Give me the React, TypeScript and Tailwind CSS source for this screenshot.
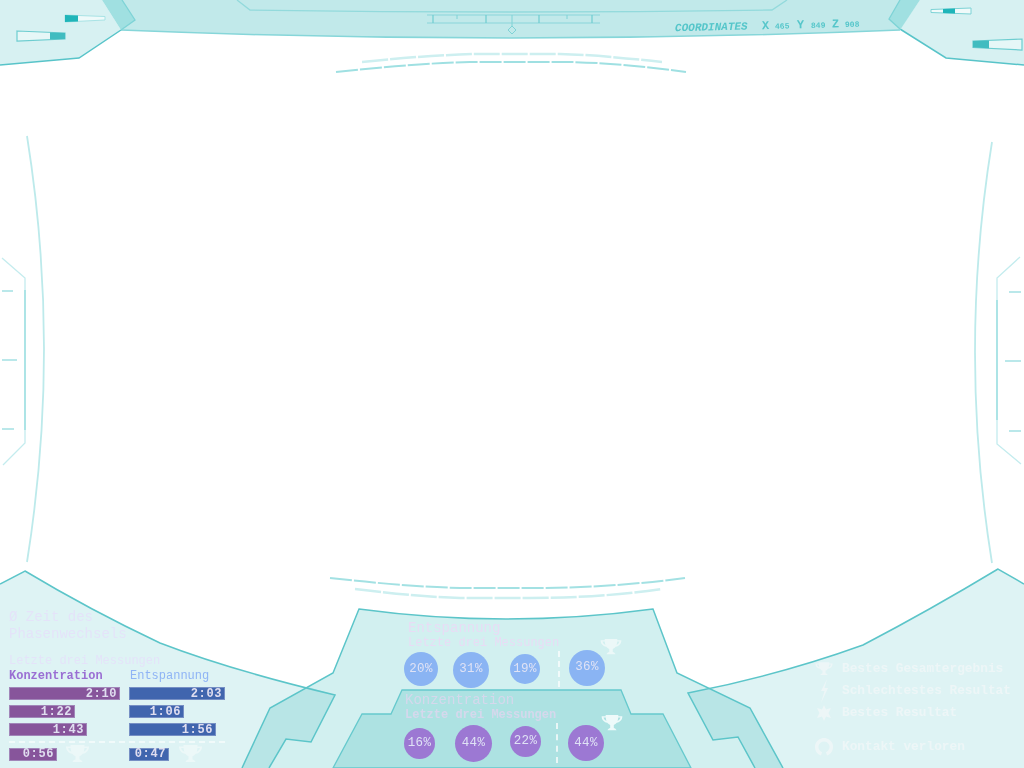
import React from 'react';

const mono = "font-['Liberation_Mono','DejaVu_Sans_Mono',monospace]";

const Trophy = ({ className }: { className?: string }) => (
  <svg viewBox="0 0 24 20" className={className} fill="currentColor">
    <path d="M5 1h14v1.500h4.500c0 4-2.500 6.500-6.200 7.300-.9 1.200-2 2-3.300 2.400v3.300c1.200.3 2.500 1.200 3 2.500H7c.5-1.300 1.800-2.200 3-2.500v-3.300c-1.300-.4-2.400-1.200-3.300-2.400C3 9 .5 6.500.5 2.500H5V1zM2.600 4c.3 1.700 1.400 3 3.200 3.700C5.400 6.600 5.200 5.300 5.100 4H2.600zm18.800 0h-2.500c-.1 1.300-.3 2.600-.7 3.700 1.800-.7 2.900-2 3.200-3.700z" />
  </svg>
);

const TimeBar = ({ value, width, tone }: { value: string; width: string; tone: string }) => (
  <div className={`h-[13px] flex items-center justify-end pr-[2px] border border-[#c9cfe6]/40 text-[12px] leading-none tracking-[0.6px] font-bold text-[#e0def0] ${tone} ${width}`}>
    {value}
  </div>
);

const Circle = ({ value, size, tone, nudge }: { value: string; size: string; tone: string; nudge?: string }) => (
  <div className={`rounded-full flex items-center justify-center shrink-0 text-[12.5px] tracking-[0.3px] text-[#dfe2f5] ${tone} ${size} ${nudge ?? ''}`}>
    {value}
  </div>
);

const HudFrame = () => (
  <svg viewBox="0 0 1024 768" className="absolute inset-0 w-[1024px] h-[768px]" fill="none">
    <defs>
      <linearGradient id="bottomEdge" x1="0" x2="1" y1="0" y2="0">
        <stop offset="0" stopColor="#6fcdd0" stopOpacity="0" />
        <stop offset="0.5" stopColor="#6fcdd0" stopOpacity="0.8" />
        <stop offset="1" stopColor="#6fcdd0" stopOpacity="0.1" />
      </linearGradient>
    </defs>

    {/* top bar */}
    <path d="M122 0L135 20L121 30Q512 46 900 30L889 19L900 0Z" fill="#c1e9ea" />
    <path d="M121 30Q512 46 900 30" stroke="#86d6d9" strokeWidth="1.500" />
    <path d="M237 0L250 10Q512 14 772 10L787 0" stroke="#93dadc" strokeWidth="1.300" />
    <path d="M427 15H600M427 23H600" stroke="#8ad6d9" strokeWidth="1.200" />
    <path d="M433 15V23M486 15V23M539 15V23M592 15V23" stroke="#6fcdd0" strokeWidth="1.200" />
    <path d="M457 15V19M567 15V19M512 15V26" stroke="#7fd3d6" strokeWidth="1" />
    <path d="M512 26L516 30L512 34L508 30Z" stroke="#7fd3d6" strokeWidth="1" />

    {/* top corners */}
    <path d="M0 0H102L121 30L79 58L0 65Z" fill="#d7f1f2" />
    <path d="M0 65L79 58L121 30" stroke="#58c4c9" strokeWidth="1.500" />
    <path d="M102 0H122L135 20L121 30Z" fill="#a0e0e1" />
    <path d="M122 0L135 20L121 30" stroke="#7dd3d6" strokeWidth="1.300" />
    <path d="M920 0H1024V65L946 58L900 29Z" fill="#d7f1f2" />
    <path d="M1024 65L946 58L900 29" stroke="#58c4c9" strokeWidth="1.500" />
    <path d="M900 0H920L900 30L889 19Z" fill="#a0e0e1" />
    <path d="M900 0L889 19L900 29" stroke="#7dd3d6" strokeWidth="1.300" />

    {/* gauges */}
    <path d="M65 15L105 16.500V20L65 22Z" fill="#eefafa" stroke="#a8e3e5" strokeWidth="1" />
    <path d="M65 15L78 15.500V21.500L65 22Z" fill="#1fb5b9" />
    <path d="M17 31L65 33V39L17 41Z" fill="#e6f7f7" stroke="#6dcdd0" strokeWidth="1.200" />
    <path d="M50 32.500L65 33V39L50 39.500Z" fill="#40bcc0" />
    <path d="M931 9.500L971 8V14L931 12.500Z" fill="#f0fafa" stroke="#7dd3d6" strokeWidth="1" />
    <path d="M943 9L955 8.600V13.400L943 13Z" fill="#1fb5b9" />
    <path d="M973 41L1022 39V50L973 47.500Z" fill="#e6f7f7" stroke="#6dcdd0" strokeWidth="1.200" />
    <path d="M973 41L989 40.400V48.300L973 47.500Z" fill="#40bcc0" />

    {/* arcs over and under the viewport */}
    <path d="M336 72Q420 63 470 62H570Q620 63 686 72" stroke="#9fe0e2" strokeWidth="2" strokeDasharray="22 2" />
    <path d="M362 62Q430 55 476 54H560Q600 55 662 62" stroke="#cdeff0" strokeWidth="2.500" strokeDasharray="26 2" />
    <path d="M330 578Q420 588 470 588H530Q610 588 685 578" stroke="#a3e1e3" strokeWidth="2" strokeDasharray="22 2" />
    <path d="M355 589Q420 597 460 598H530Q600 598 662 589" stroke="#cdeff0" strokeWidth="2.500" strokeDasharray="26 2" />

    {/* sides */}
    <path d="M27 136Q61 349 27 562" stroke="#bdeaeb" strokeWidth="1.800" />
    <path d="M992 142Q958 352 992 563" stroke="#bdeaeb" strokeWidth="1.800" />
    <path d="M2 258L25 278V443L3 465" stroke="#c4ecee" strokeWidth="1.300" />
    <path d="M25 290V430" stroke="#96dcdf" strokeWidth="1.300" />
    <path d="M2 291H13M2 360H17M2 429H14" stroke="#a4e1e3" strokeWidth="1.500" />
    <path d="M1020 257L997 278V444L1021 464" stroke="#c4ecee" strokeWidth="1.300" />
    <path d="M997 300V420" stroke="#96dcdf" strokeWidth="1.300" />
    <path d="M1009 292H1021M1005 361H1021M1009 431H1021" stroke="#a4e1e3" strokeWidth="1.500" />

    {/* bottom panels */}
    <path d="M0 584L25 571Q90 610 160 643Q230 670 335 695L311 742L286 739L269 768H0Z" fill="#def3f4" />
    <path d="M1024 584L998 569Q930 610 863 645Q780 675 688 693L713 740L738 737L755 768H1024Z" fill="#def3f4" />
    <path d="M359 609Q506 629 653 609L677 673L750 708L783 768H242L270 708L333 673Z" fill="#d2f0f0" />
    <path d="M270 708L308 687L335 695L311 742L286 739L269 768H242Z" fill="#b8e5e6" />
    <path d="M750 708L709 688L688 693L713 740L738 737L755 768H783Z" fill="#b8e5e6" />
    <path d="M333 768L362 714H391L402 690H621L631 714H663L691 768Z" fill="#ade2e2" stroke="#66c9cd" strokeWidth="1.300" />
    <path d="M0 584L25 571Q90 610 160 643Q230 670 335 695L311 742L286 739L269 768" stroke="#5cc5c9" strokeWidth="1.500" />
    <path d="M1024 584L998 569Q930 610 863 645Q780 675 688 693L713 740L738 737L755 768" stroke="#5cc5c9" strokeWidth="1.500" />
    <path d="M242 768L270 708L333 673L359 609Q506 629 653 609L677 673L750 708L783 768" stroke="#5cc5c9" strokeWidth="1.500" />
    <path d="M857 767H1024" stroke="url(#bottomEdge)" strokeWidth="1.500" />
  </svg>
);

const App: React.FC = () => {
  return (
    <div className={`relative w-[1024px] h-[768px] overflow-hidden bg-white blur-[0.4px] ${mono}`}>
      <HudFrame />

      {/* coordinates */}
      <div className="absolute left-[675px] top-[20px] flex items-baseline -rotate-[1.4deg] text-[#55c6ca] whitespace-nowrap leading-none">
        <span className="text-[11px] italic font-bold w-[87px]">COORDINATES</span>
        <span className="text-[12px] font-bold w-[13px]">X</span>
        <span className="text-[8px] font-bold w-[22px]">465</span>
        <span className="text-[12px] font-bold w-[14px]">Y</span>
        <span className="text-[8px] font-bold w-[21px]">849</span>
        <span className="text-[12px] font-bold w-[13px]">Z</span>
        <span className="text-[8px] font-bold">908</span>
      </div>

      {/* left panel */}
      <div className="absolute left-[9px] top-[609px] w-[216px] flex flex-col">
        <div className="text-[14px] leading-[17px] text-[#e4e3f9] whitespace-nowrap">
          <div>Ø Zeit des</div>
          <div>Phasenwechsels</div>
        </div>
        <div className="mt-[11px] text-[12px] leading-[14px] text-[#e4e3f9] whitespace-nowrap">Letzte drei Messungen</div>
        <div className="mt-[1px] grid grid-cols-[120px_96px] text-[12px] leading-[14px] font-bold">
          <div className="text-[#9a6fd3]">Konzentration</div>
          <div className="text-[#8fb4f5] font-normal pl-[1px]">Entspannung</div>
        </div>
        <div className="mt-[4px] grid grid-cols-[120px_96px] gap-y-[5px]">
          <TimeBar value="2:10" width="w-[111px]" tone="bg-[#87559b]" />
          <TimeBar value="2:03" width="w-[96px]" tone="bg-[#4065ae]" />
          <TimeBar value="1:22" width="w-[66px]" tone="bg-[#87559b]" />
          <TimeBar value="1:06" width="w-[55px]" tone="bg-[#4065ae]" />
          <TimeBar value="1:43" width="w-[78px]" tone="bg-[#87559b]" />
          <TimeBar value="1:56" width="w-[87px]" tone="bg-[#4065ae]" />
        </div>
        <div className="mt-[5px] border-t-2 border-dashed border-[#f1fafa]" />
        <div className="mt-[1px] grid grid-cols-[120px_96px]">
          <div className="flex items-center gap-[8px]">
            <TimeBar value="0:56" width="w-[48px]" tone="bg-[#87559b]" />
            <Trophy className="w-[25px] h-[20px] text-[#ecf8f8]" />
          </div>
          <div className="flex items-center gap-[9px]">
            <TimeBar value="0:47" width="w-[40px]" tone="bg-[#4065ae]" />
            <Trophy className="w-[25px] h-[20px] text-[#ecf8f8]" />
          </div>
        </div>
      </div>

      {/* center: Entspannung */}
      <div className="absolute left-[404px] top-[621px] w-[220px]">
        <div className="pl-[4px] text-[14px] leading-[15px] text-[#e8dcf5] whitespace-nowrap">Entspannung</div>
        <div className="pl-[4px] text-[12px] leading-[14px] text-[#e8dcf5] whitespace-nowrap">Letzte drei Messungen</div>
        <div className="mt-[1px] flex items-center h-[36px]">
          <Circle value="20%" size="w-[34px] h-[34px]" tone="bg-[#8ab4f3]" />
          <Circle value="31%" size="w-[36px] h-[36px]" tone="bg-[#8ab4f3]" nudge="ml-[15px] mt-[1px]" />
          <Circle value="19%" size="w-[30px] h-[30px]" tone="bg-[#8ab4f3]" nudge="ml-[21px]" />
          <div className="ml-[18px] w-0 h-[36px] border-l-2 border-dashed border-[#f1fafa]" />
          <Circle value="36%" size="w-[36px] h-[36px]" tone="bg-[#8ab4f3]" nudge="ml-[9px] -mt-[3px]" />
        </div>
        <Trophy className="absolute left-[196px] top-[17px] w-[22px] h-[18px] text-[#ecf8f8]" />
      </div>

      {/* center: Konzentration */}
      <div className="absolute left-[404px] top-[693px] w-[220px]">
        <div className="pl-[1px] text-[14px] leading-[15px] text-[#d5d8ec] whitespace-nowrap">Konzentration</div>
        <div className="pl-[1px] text-[12px] leading-[14px] font-bold text-[#d5d8ec] whitespace-nowrap">Letzte drei Messungen</div>
        <div className="mt-[1px] flex items-center h-[40px]">
          <Circle value="16%" size="w-[31px] h-[31px]" tone="bg-[#9c78d3]" nudge="mt-[1px]" />
          <Circle value="44%" size="w-[37px] h-[37px]" tone="bg-[#9c78d3]" nudge="ml-[20px] mt-[1px]" />
          <Circle value="22%" size="w-[31px] h-[31px]" tone="bg-[#9c78d3]" nudge="ml-[18px] -mt-[4px]" />
          <div className="ml-[15px] w-0 h-[40px] border-l-2 border-dashed border-[#e9f6f6]" />
          <Circle value="44%" size="w-[36px] h-[36px]" tone="bg-[#9c78d3]" nudge="ml-[10px]" />
        </div>
        <Trophy className="absolute left-[197px] top-[21px] w-[22px] h-[18px] text-[#eefafa]" />
      </div>

      {/* legend */}
      <div className="absolute left-[815px] top-[660px] flex flex-col gap-[4px] text-[12.8px] leading-[18px] font-bold text-[#edf6f7] whitespace-nowrap">
        <div className="flex items-center gap-[9px]">
          <Trophy className="w-[18px] h-[16px]" />
          <span>Bestes Gesamtergebnis</span>
        </div>
        <div className="flex items-center gap-[9px]">
          <svg viewBox="0 0 18 18" className="w-[18px] h-[18px] overflow-visible" fill="currentColor">
            <path d="M12 -3L6 9H9.500L6 21L13 6H9.500Z" />
          </svg>
          <span>Schlechtestes Resultat</span>
        </div>
        <div className="flex items-center gap-[9px]">
          <svg viewBox="0 0 18 18" className="w-[18px] h-[18px]" fill="currentColor">
            <path d="M9 1L11 5.500L16 4L13.500 9L16 14L11 12.500L9 17L7 12.500L2 14L4.500 9L2 4L7 5.500Z" />
          </svg>
          <span>Bestes Resultat</span>
        </div>
        <div className="mt-[12px] flex items-center gap-[9px]">
          <svg viewBox="0 0 18 18" className="w-[18px] h-[18px]" fill="none" stroke="currentColor" strokeWidth="3.500">
            <path d="M6.500 15.800A7.300 7.300 0 1 1 11.500 15.800" />
          </svg>
          <span>Kontakt verloren</span>
        </div>
      </div>
    </div>
  );
};

export default App;
